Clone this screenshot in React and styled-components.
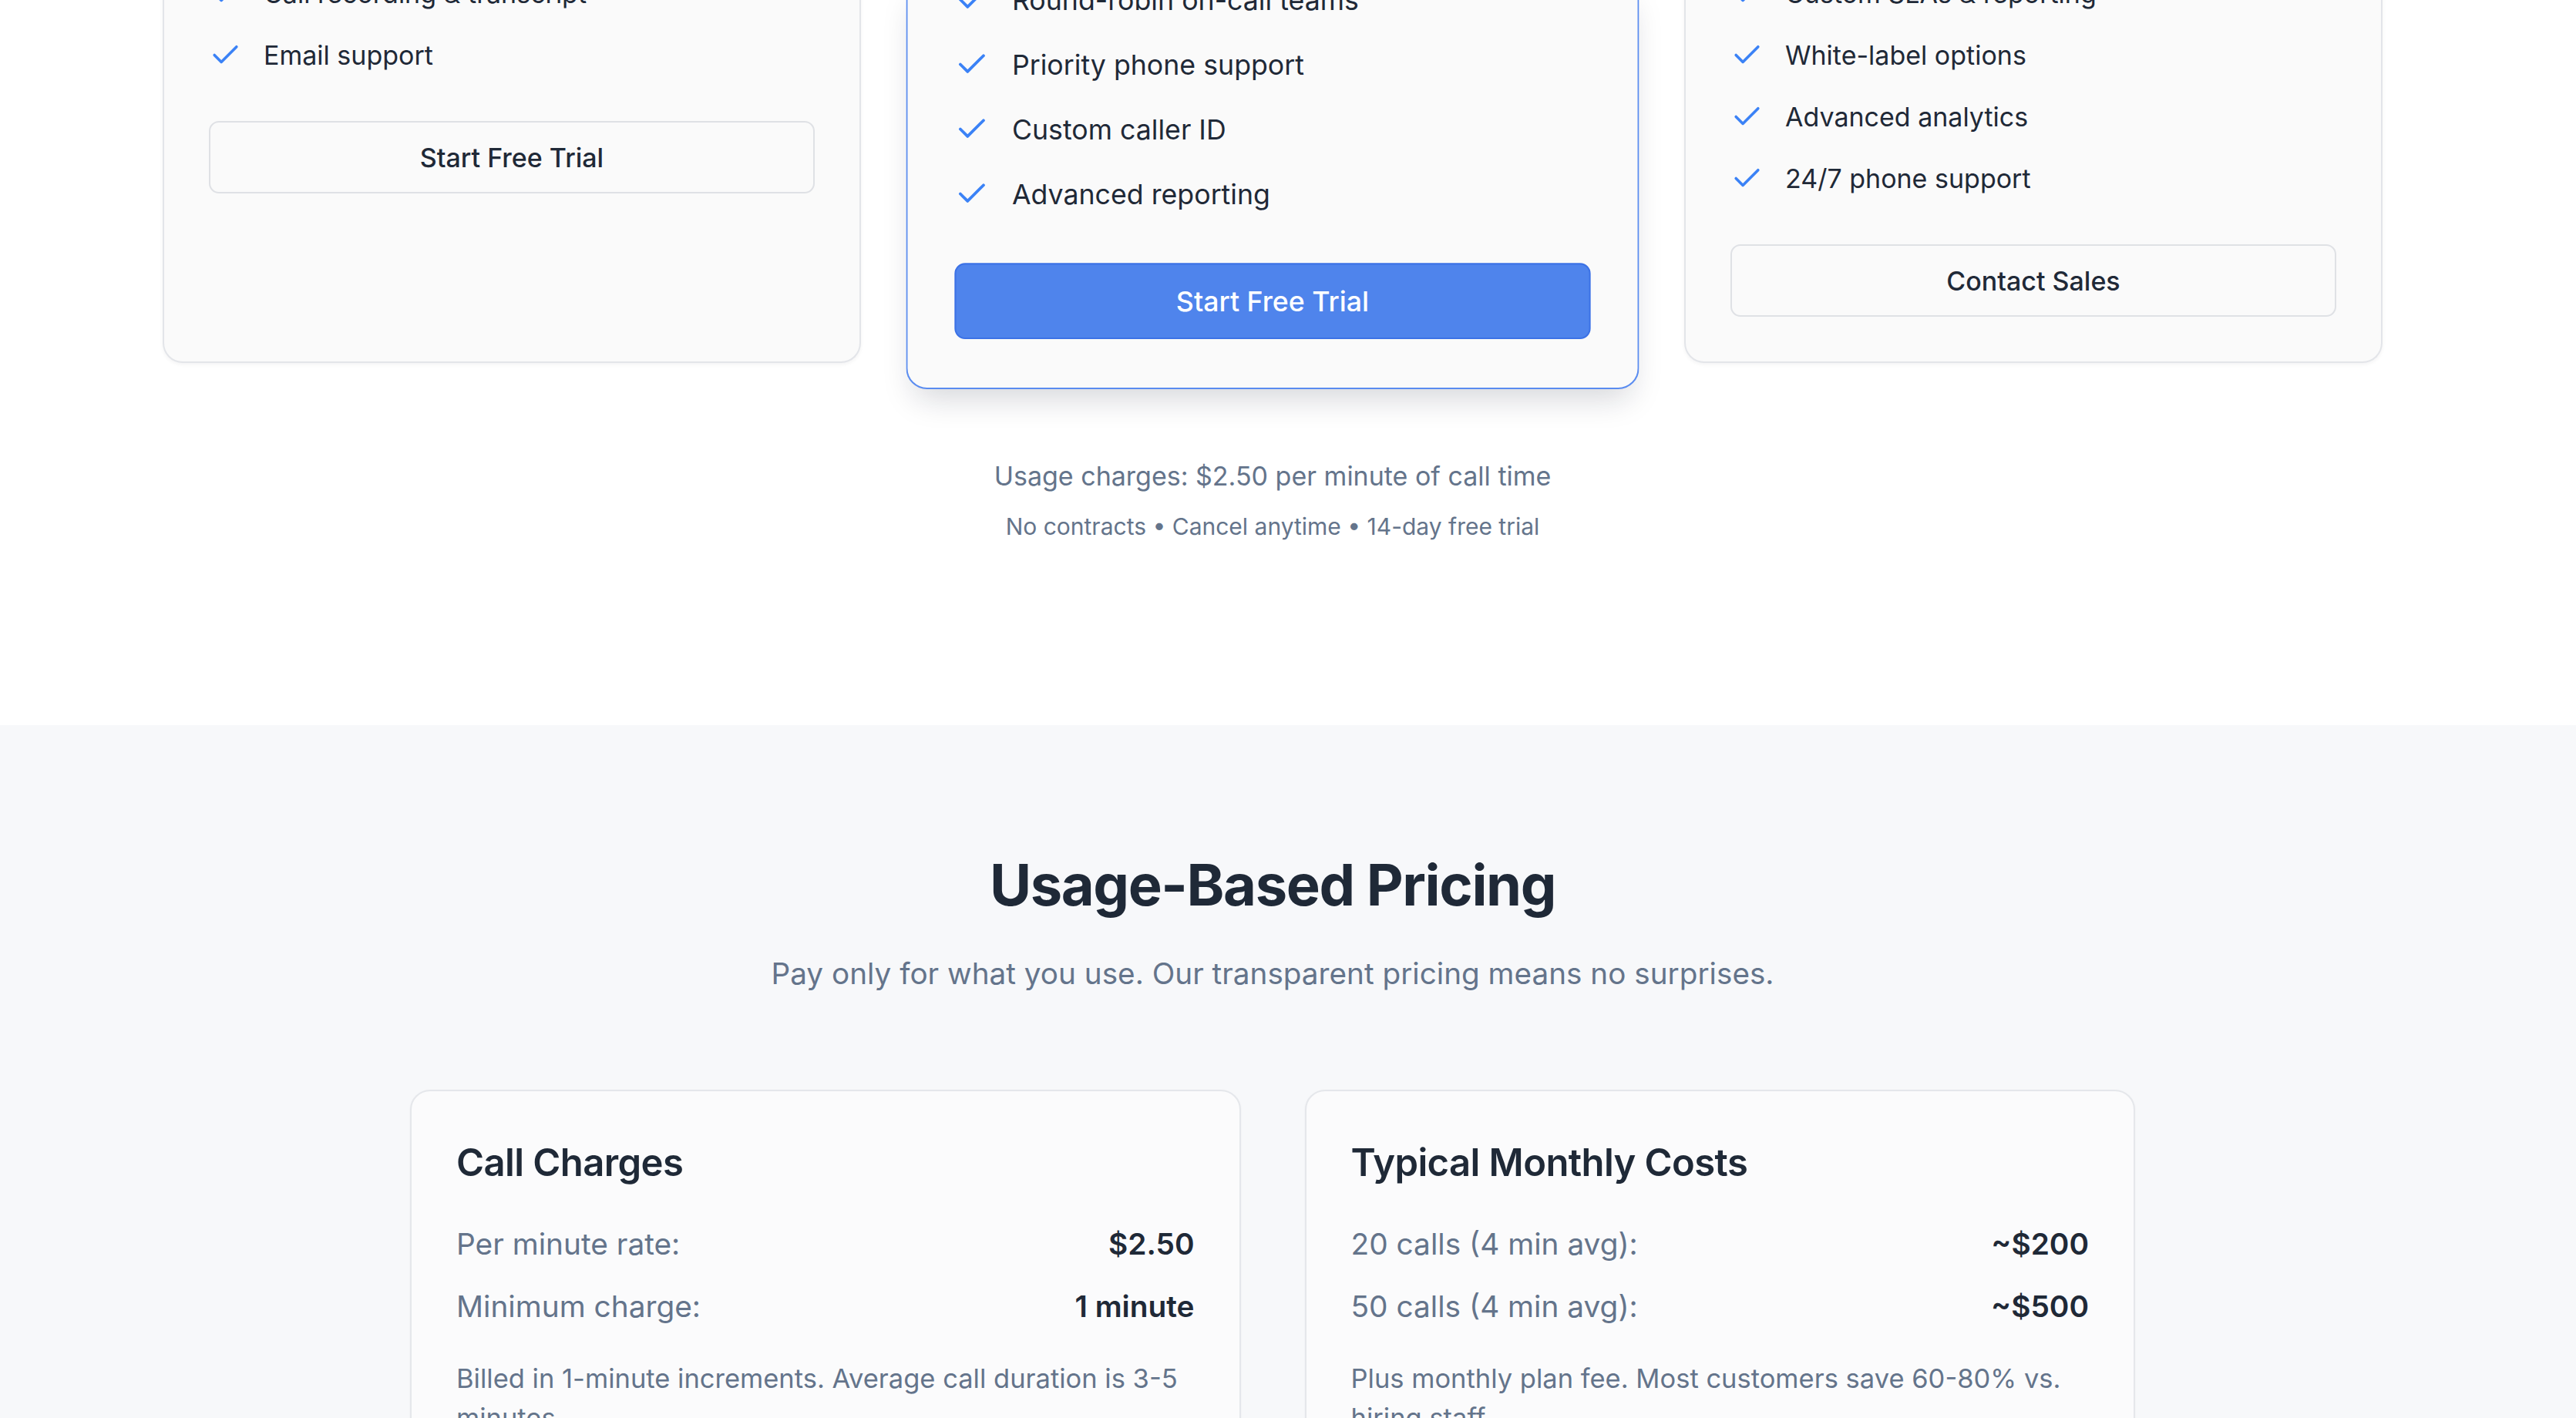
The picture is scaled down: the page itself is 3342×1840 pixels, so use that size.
import React from 'react';
import styled, { createGlobalStyle } from 'styled-components';
import { Check } from 'lucide-react';

const plans = [
    {
        features: ['Call recording & transcript', 'Email support'],
        cta: 'Start Free Trial',
    },
    {
        featured: true,
        features: ['Round-robin on-call teams', 'Priority phone support', 'Custom caller ID', 'Advanced reporting'],
        cta: 'Start Free Trial',
    },
    {
        features: ['Custom SLAs & reporting', 'White-label options', 'Advanced analytics', '24/7 phone support'],
        cta: 'Contact Sales',
    },
];

const costCards = [
    {
        title: 'Call Charges',
        rows: [
            ['Per minute rate:', '$2.50'],
            ['Minimum charge:', '1 minute'],
        ],
        note: 'Billed in 1-minute increments. Average call duration is 3-5 minutes.',
    },
    {
        title: 'Typical Monthly Costs',
        rows: [
            ['20 calls (4 min avg):', '~$200'],
            ['50 calls (4 min avg):', '~$500'],
        ],
        note: 'Plus monthly plan fee. Most customers save 60-80% vs. hiring staff.',
    },
];

const App = () => {
    return (
        <>
            <GlobalStyle />
            <PlansSection>
                <PlanGrid>
                    {plans.map((plan, key) => (
                        <PlanCard key={key} $featured={plan.featured}>
                            <FeatureList>
                                {plan.features.map((feature) => (
                                    <Feature key={feature}>
                                        <Check size={43} strokeWidth={2} />
                                        <span>{feature}</span>
                                    </Feature>
                                ))}
                            </FeatureList>
                            <PlanButton $primary={plan.featured}>{plan.cta}</PlanButton>
                        </PlanCard>
                    ))}
                </PlanGrid>
                <FinePrint>
                    <UsageLine>Usage charges: $2.50 per minute of call time</UsageLine>
                    <TermsLine>No contracts • Cancel anytime • 14-day free trial</TermsLine>
                </FinePrint>
            </PlansSection>

            <UsageSection>
                <Heading>Usage-Based Pricing</Heading>
                <Subheading>Pay only for what you use. Our transparent pricing means no surprises.</Subheading>
                <CostGrid>
                    {costCards.map((card) => (
                        <CostCard key={card.title}>
                            <CostTitle>{card.title}</CostTitle>
                            <CostRows>
                                {card.rows.map(([label, value]) => (
                                    <CostRow key={label}>
                                        <span>{label}</span>
                                        <strong>{value}</strong>
                                    </CostRow>
                                ))}
                            </CostRows>
                            <CostNote>{card.note}</CostNote>
                        </CostCard>
                    ))}
                </CostGrid>
            </UsageSection>
        </>
    );
};

export default App;

//GLOBAL
const GlobalStyle = createGlobalStyle`
* {
    box-sizing: border-box;
}
html, body {
    margin: 0;
    padding: 0;
    background: #ffffff;
    font-family: Inter, "Noto Sans", "Liberation Sans", sans-serif;
    color: #1f2937;
    overflow: hidden;
}
`;

//PLANS
const PlansSection = styled.section`
display: flow-root;
background: #ffffff;
padding: 0 40px 236px 0;
`;

const PlanGrid = styled.div`
width: 2880px;
margin: -36px auto 0;
display: grid;
grid-template-columns: repeat(3, 1fr);
gap: 81px;
`;

const PlanCard = styled.div`
background: #fafafa;
border: 2px solid ${props => props.$featured ? '#5a8cf0' : '#e3e5e9'};
border-radius: 0 0 26px 26px;
border-top: none;
padding: ${props => props.$featured ? '0 58px 60px' : '2px 58px 58px'};
box-shadow: ${props => props.$featured
    ? '0 22px 40px -12px rgba(15, 23, 42, 0.18)'
    : '0 2px 5px rgba(15, 23, 42, 0.05)'};
transform: ${props => props.$featured ? 'scale(1.05)' : 'none'};
transform-origin: 50% -175px;
position: relative;
z-index: ${props => props.$featured ? 1 : 0};
`;

const FeatureList = styled.ul`
list-style: none;
margin: 0 0 60px;
padding: 0;
display: flex;
flex-direction: column;
gap: 29px;
`;

const Feature = styled.li`
display: flex;
align-items: center;
gap: 28px;
font-size: 34px;
line-height: 51px;
color: #1f2937;

svg {
    flex-shrink: 0;
    color: #3b82f6;
}
`;

const PlanButton = styled.button`
display: block;
width: 100%;
height: 94px;
border-radius: 13px;
font-family: inherit;
font-size: 34px;
font-weight: 500;
cursor: pointer;
border: 2px solid ${props => props.$primary ? '#3c72e6' : '#dfe1e5'};
background: ${props => props.$primary ? '#4f84ec' : '#fafafa'};
color: ${props => props.$primary ? '#ffffff' : '#1f2937'};
`;

const FinePrint = styled.div`
margin-top: 121px;
text-align: center;
`;

const UsageLine = styled.p`
margin: 0;
font-size: 34px;
line-height: 51px;
color: #64748b;
`;

const TermsLine = styled.p`
margin: 19px 0 0;
font-size: 30px;
line-height: 43px;
color: #64748b;
`;

//USAGE
const UsageSection = styled.section`
background: #f7f8fa;
padding: 161px 40px 120px 0;
text-align: center;
`;

const Heading = styled.h2`
margin: 0;
font-size: 74px;
line-height: 92px;
font-weight: 700;
letter-spacing: -1.4px;
color: #1f2937;
`;

const Subheading = styled.p`
margin: 39px 0 0;
font-size: 38.7px;
line-height: 60px;
color: #64748b;
`;

const CostGrid = styled.div`
width: 2238px;
margin: 121px auto 0;
display: grid;
grid-template-columns: 1fr 1fr;
gap: 83px;
text-align: left;
`;

const CostCard = styled.div`
background: #fbfbfc;
border: 2px solid #e5e7eb;
border-radius: 26px;
padding: 57px 58px 58px;
box-shadow: 0 1px 3px rgba(15, 23, 42, 0.04);
`;

const CostTitle = styled.h3`
margin: 0;
font-size: 49px;
line-height: 72px;
font-weight: 600;
letter-spacing: -0.6px;
color: #1f2937;
`;

const CostRows = styled.div`
margin-top: 40px;
display: flex;
flex-direction: column;
gap: 24px;
`;

const CostRow = styled.div`
display: flex;
justify-content: space-between;
align-items: center;
font-size: 38.8px;
line-height: 57px;
color: #64748b;

strong {
    font-weight: 600;
    color: #1f2937;
}
`;

const CostNote = styled.p`
margin: 40px 0 0;
font-size: 34.5px;
line-height: 51px;
color: #64748b;
`;
